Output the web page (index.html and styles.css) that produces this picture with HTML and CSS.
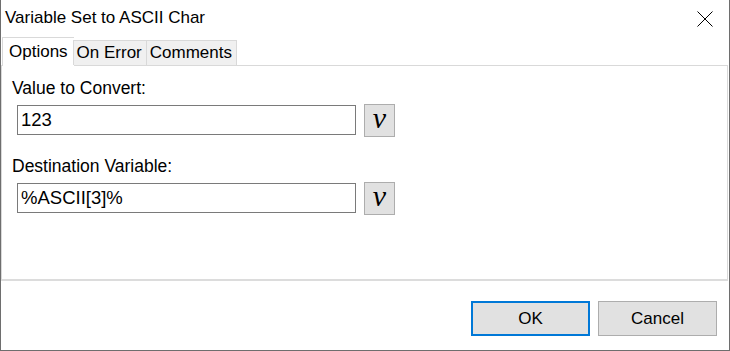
FILE: index.html
```html
<!DOCTYPE html>
<html lang="en">
<head>
    <meta charset="UTF-8">
    <title>Variable Set to ASCII Char</title>
    <link rel="stylesheet" href="styles.css">
</head>
<body>
    <div class="dialog">
        <div class="title-bar">
            <span class="title">Variable Set to ASCII Char</span>
            <svg class="close-icon" width="16" height="16" viewBox="0 0 16 16">
                <path d="M0.5 0.5 L15.5 15.5 M15.5 0.5 L0.5 15.5" stroke="#000" stroke-width="1" fill="none"/>
            </svg>
        </div>
        <div class="tabs">
            <div class="tab active">Options</div>
            <div class="tab">On Error</div>
            <div class="tab">Comments</div>
        </div>
        <div class="tab-panel">
            <div class="field">
                <label>Value to Convert:</label>
                <div class="field-row">
                    <div class="text-input">123</div>
                    <div class="var-button">v</div>
                </div>
            </div>
            <div class="field">
                <label>Destination Variable:</label>
                <div class="field-row">
                    <div class="text-input">%ASCII[3]%</div>
                    <div class="var-button">v</div>
                </div>
            </div>
        </div>
        <div class="footer">
            <button class="btn default">OK</button>
            <button class="btn">Cancel</button>
        </div>
    </div>
</body>
</html>
```

FILE: styles.css
```css
* {
    margin: 0;
    padding: 0;
    box-sizing: border-box;
}

body {
    background-color: #fff;
    font-family: 'Liberation Sans', Arial, sans-serif;
    color: #000;
}

.dialog {
    width: 730px;
    height: 351px;
    border: 1px solid #6e6e6e;
    border-top: none;
    background-color: #fff;
    display: flex;
    flex-direction: column;
}

.title-bar {
    height: 37px;
    display: flex;
    align-items: center;
    justify-content: space-between;
    padding-left: 4px;
    padding-right: 16px;
}

.title {
    font-size: 17px;
    margin-top: -1px;
}

.close-icon {
    display: block;
    margin-top: 1px;
}

/* Tabs */
.tabs {
    display: flex;
    align-items: flex-end;
    height: 28px;
    padding-left: 1px;
    position: relative;
    z-index: 1;
}

.tab {
    height: 25px;
    padding: 0 4px 0 3px;
    font-size: 17px;
    line-height: 23px;
    background-color: #f0f0f0;
    border: 1px solid #d9d9d9;
    border-bottom: none;
    margin-left: -1px;
}

.tab.active {
    height: 29px;
    margin-bottom: -1px;
    margin-left: 0;
    background-color: #fff;
    padding: 3px 6px 0;
    line-height: 22px;
    border-right: none;
}

.tab-panel {
    height: 216px;
    margin-right: 1px;
    border: 1px solid #d9d9d9;
    border-bottom: 2px solid #dcdcdc;
    padding: 11px 10px 0;
}

.field {
    margin-bottom: 18px;
}

.field label {
    display: block;
    font-size: 17.5px;
    line-height: 22px;
    margin-bottom: 6px;
}

.field-row {
    display: flex;
    align-items: flex-start;
    gap: 8px;
    padding-left: 5px;
}

.text-input {
    width: 339px;
    height: 30px;
    border: 1px solid #7a7a7a;
    font-size: 18.5px;
    line-height: 28px;
    padding-left: 3px;
}

.var-button {
    width: 31px;
    height: 33px;
    margin-top: -1px;
    background-color: #e1e1e1;
    border: 1px solid #adadad;
    font-family: 'Liberation Serif', 'Times New Roman', serif;
    font-style: italic;
    font-size: 30px;
    line-height: 26px;
    text-align: center;
}

.footer {
    flex: 1;
    display: flex;
    justify-content: flex-end;
    align-items: flex-start;
    gap: 8px;
    padding: 20px 12px 0 0;
}

.btn {
    width: 119px;
    height: 35px;
    background-color: #e1e1e1;
    border: 1px solid #adadad;
    font-family: 'Liberation Sans', Arial, sans-serif;
    font-size: 17px;
    color: #000;
}

.btn.default {
    border: 2px solid #0078d7;
}
```
